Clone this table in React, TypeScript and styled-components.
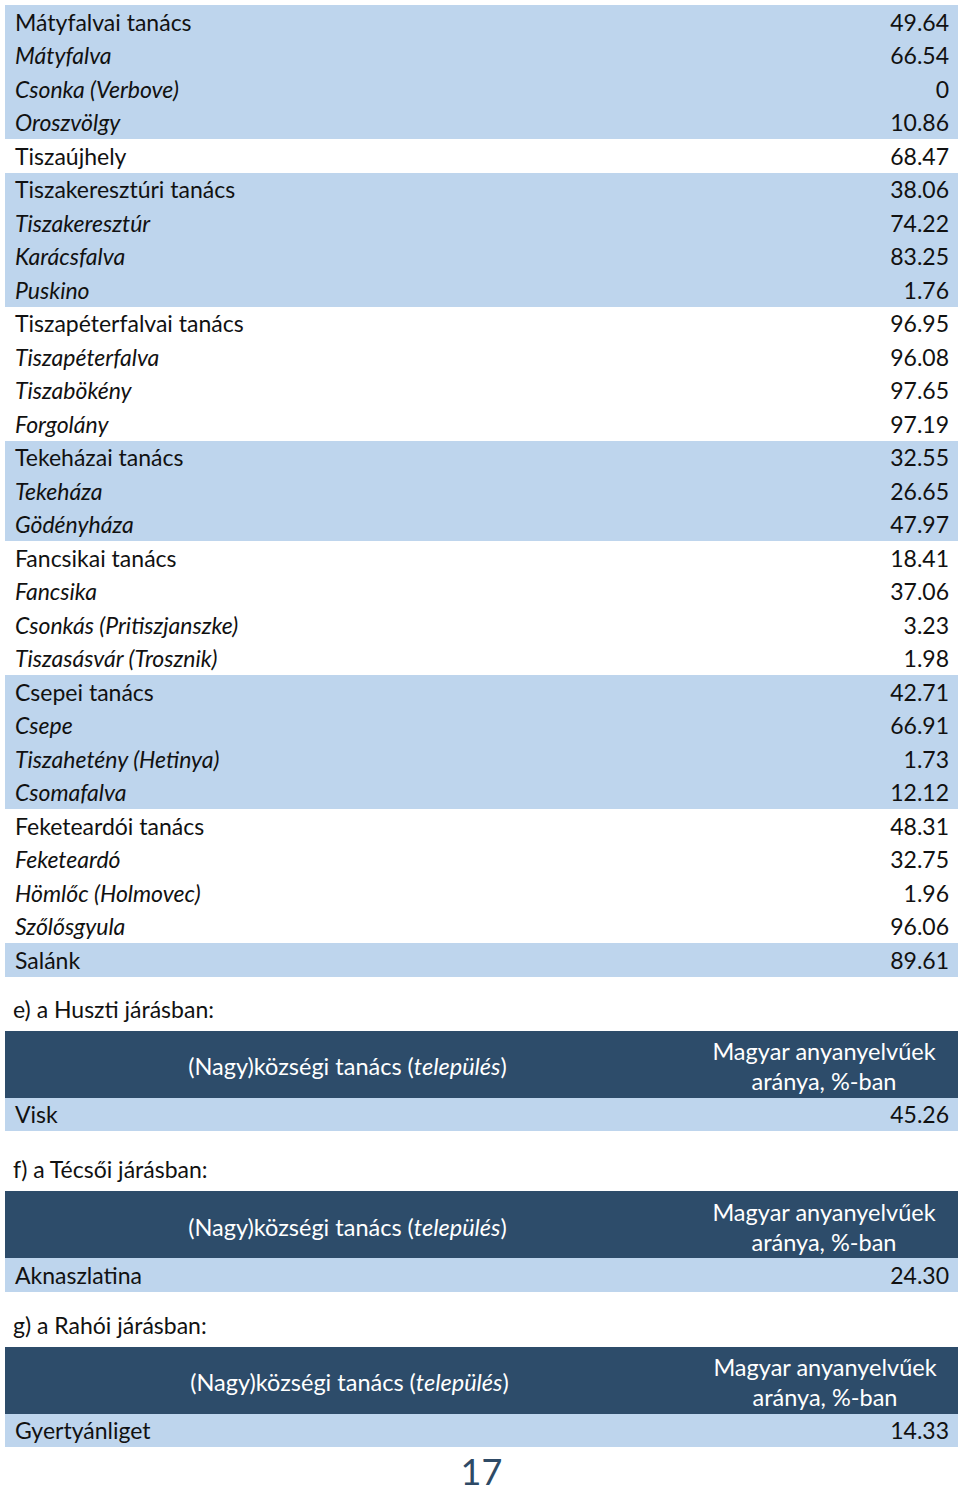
import React from "react";
import styled, { createGlobalStyle } from "styled-components";

const Global = createGlobalStyle`
  html, body { margin: 0; padding: 0; background: #ffffff; }
  body { font-family: Lato, "Open Sans", "DejaVu Sans", sans-serif; color: #111111; }
`;

const Page = styled.div`
  width: 953px;
  padding: 5px 2px 0 5px;
`;

const Table = styled.div`
  display: flex;
  flex-direction: column;
`;

const Row = styled.div<{ $band: boolean }>`
  height: 33.5px;
  box-sizing: border-box;
  display: flex;
  align-items: center;
  justify-content: space-between;
  padding: 0 9px 0 10px;
  background: ${(p) => (p.$band ? "#bed5ed" : "#ffffff")};
  font-size: 23px;
`;

const Name = styled.span<{ $italic?: boolean }>`
  font-style: ${(p) => (p.$italic ? "italic" : "normal")};
`;

const Value = styled.span``;

const Label = styled.div<{ $top: number }>`
  padding: ${(p) => p.$top}px 0 10px 8px;
  line-height: 24px;
  font-size: 23px;
`;

const Header = styled.div<{ $shift?: number }>`
  height: 67px;
  display: grid;
  grid-template-columns: 685px 1fr;
  background: #2d4c6a;
  color: #ffffff;
  font-size: 23.5px;
  padding-left: ${(p) => p.$shift ?? 0}px;
`;

const HeadCell = styled.div`
  display: flex;
  align-items: center;
  justify-content: center;
  text-align: center;
  line-height: 30px;
  padding-top: 4px;
`;

const PageNum = styled.div`
  text-align: center;
  font-size: 36px;
  color: #2e4a66;
  padding-top: 7px;
  line-height: 34px;
`;

type Item = [string, string, boolean];

const main: Item[] = [
  ["Mátyfalvai tanács", "49.64", false],
  ["Mátyfalva", "66.54", true],
  ["Csonka (Verbove)", "0", true],
  ["Oroszvölgy", "10.86", true],
  ["Tiszaújhely", "68.47", false],
  ["Tiszakeresztúri tanács", "38.06", false],
  ["Tiszakeresztúr", "74.22", true],
  ["Karácsfalva", "83.25", true],
  ["Puskino", "1.76", true],
  ["Tiszapéterfalvai tanács", "96.95", false],
  ["Tiszapéterfalva", "96.08", true],
  ["Tiszabökény", "97.65", true],
  ["Forgolány", "97.19", true],
  ["Tekeházai tanács", "32.55", false],
  ["Tekeháza", "26.65", true],
  ["Gödényháza", "47.97", true],
  ["Fancsikai tanács", "18.41", false],
  ["Fancsika", "37.06", true],
  ["Csonkás (Pritiszjanszke)", "3.23", true],
  ["Tiszasásvár (Trosznik)", "1.98", true],
  ["Csepei tanács", "42.71", false],
  ["Csepe", "66.91", true],
  ["Tiszahetény (Hetinya)", "1.73", true],
  ["Csomafalva", "12.12", true],
  ["Feketeardói tanács", "48.31", false],
  ["Feketeardó", "32.75", true],
  ["Hömlőc (Holmovec)", "1.96", true],
  ["Szőlősgyula", "96.06", true],
  ["Salánk", "89.61", false],
];

const bandSizes = [4, 1, 4, 4, 3, 4, 4, 4, 1];
const bandOf: boolean[] = [];
bandSizes.forEach((n, i) => {
  for (let k = 0; k < n; k++) bandOf.push(i % 2 === 0);
});

const sections = [
  { label: "e) a Huszti járásban:", name: "Visk", value: "45.26", top: 20, shift: 0 },
  { label: "f) a Técsői járásban:", name: "Aknaszlatina", value: "24.30", top: 26, shift: 0 },
  { label: "g) a Rahói járásban:", name: "Gyertyánliget", value: "14.33", top: 21, shift: 2 },
];

export default function App() {
  return (
    <Page>
      <Global />
      <Table>
        {main.map(([n, v, it], i) => (
          <Row key={n} $band={bandOf[i]}>
            <Name $italic={it}>{n}</Name>
            <Value>{v}</Value>
          </Row>
        ))}
      </Table>
      {sections.map((s) => (
        <React.Fragment key={s.label}>
          <Label $top={s.top}>{s.label}</Label>
          <Header $shift={s.shift}>
            <HeadCell>
              <span>
                (Nagy)községi tanács (<i>település</i>)
              </span>
            </HeadCell>
            <HeadCell>
              Magyar anyanyelvűek
              <br />
              aránya, %-ban
            </HeadCell>
          </Header>
          <Row $band>
            <Name>{s.name}</Name>
            <Value>{s.value}</Value>
          </Row>
        </React.Fragment>
      ))}
      <PageNum>17</PageNum>
    </Page>
  );
}
